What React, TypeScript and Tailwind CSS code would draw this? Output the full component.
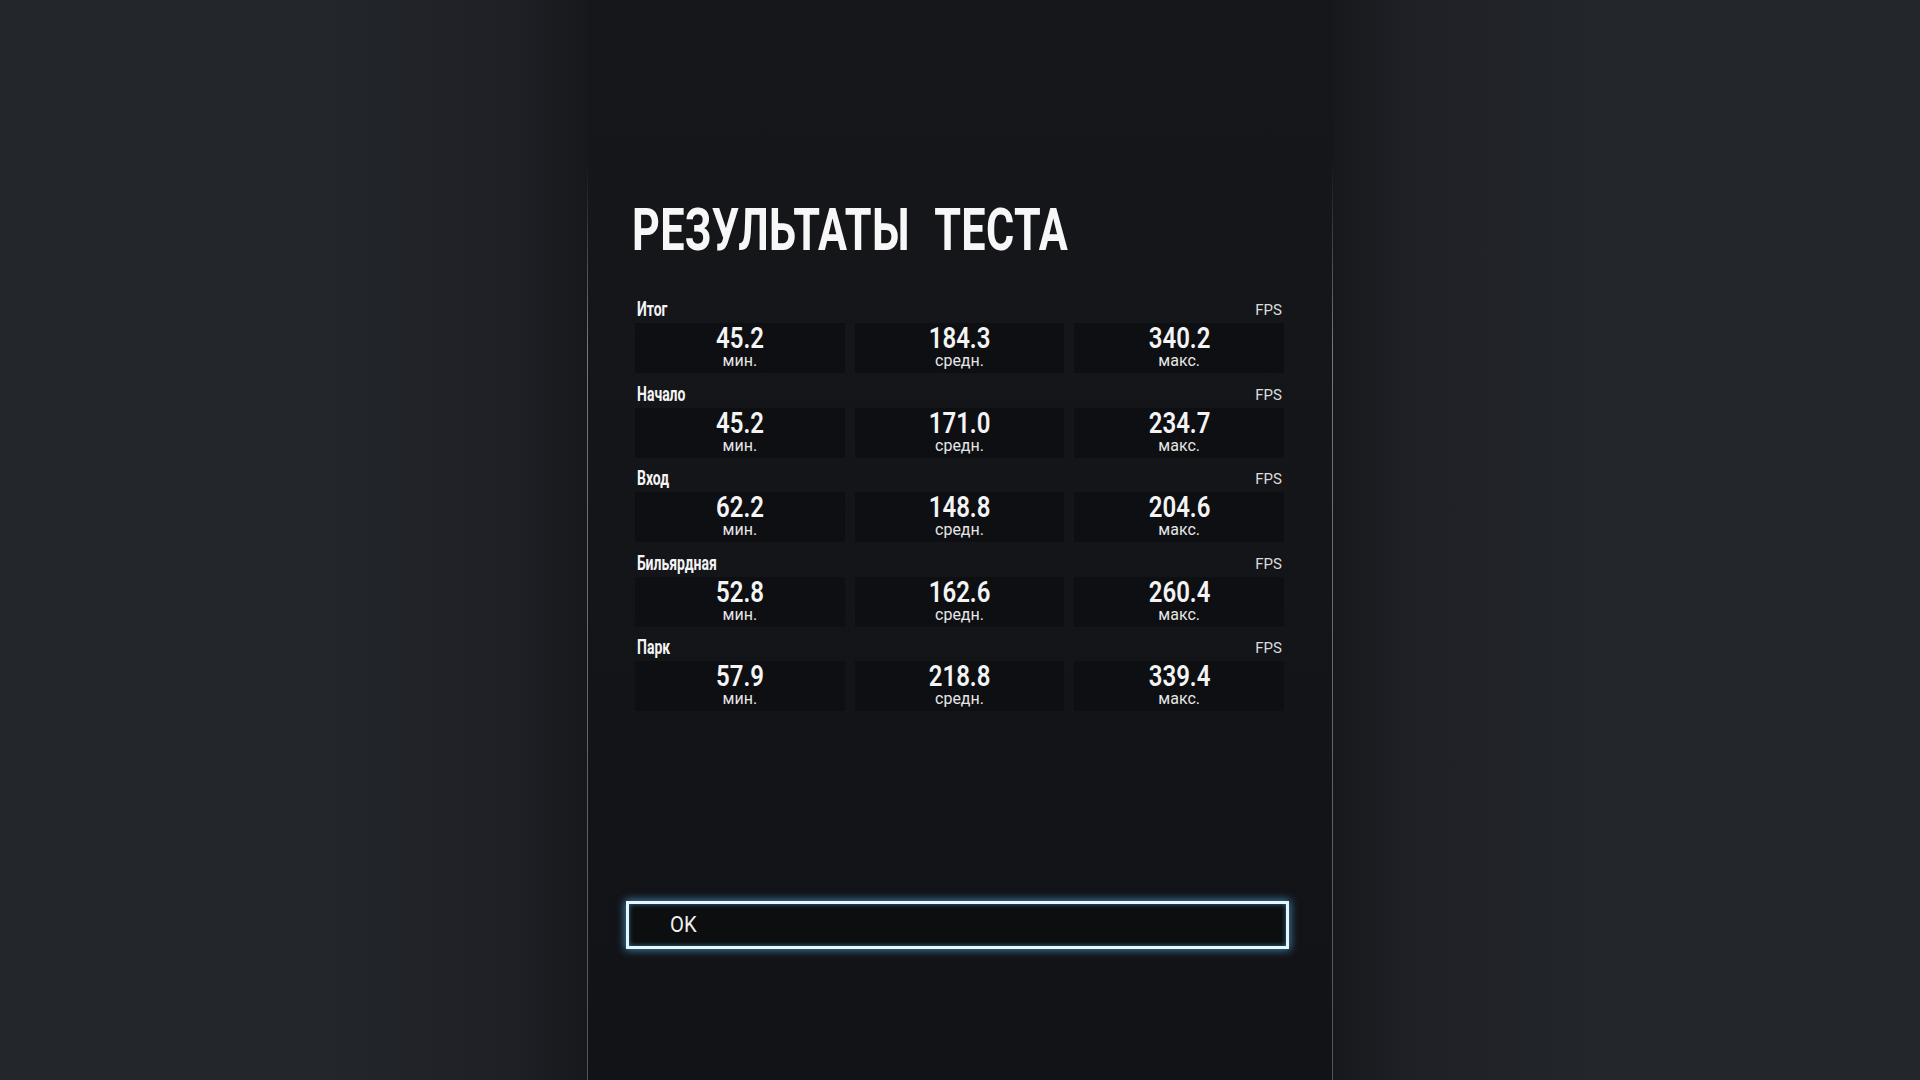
import React from "react";

type Row = { name: string; min: string; avg: string; max: string };

const rows: Row[] = [
  { name: "Итог", min: "45.2", avg: "184.3", max: "340.2" },
  { name: "Начало", min: "45.2", avg: "171.0", max: "234.7" },
  { name: "Вход", min: "62.2", avg: "148.8", max: "204.6" },
  { name: "Бильярдная", min: "52.8", avg: "162.6", max: "260.4" },
  { name: "Парк", min: "57.9", avg: "218.8", max: "339.4" },
];

function Cell({ value, label }: { value: string; label: string }) {
  return (
    <div className="flex h-[50px] flex-col items-center bg-[#0e0f12]">
      <span className="inline-block h-[29px] origin-center scale-x-[0.8] text-[30px] font-semibold leading-[29px] text-[#f4f4f4]">
        {value}
      </span>
      <span className="mt-[1px] text-[16px] leading-[16px] text-[#e6e6e6]">{label}</span>
    </div>
  );
}

export default function App() {
  return (
    <div
      className="flex h-[1080px] w-[1920px] overflow-hidden bg-[#23262b]"
      style={{ fontFamily: "Roboto, 'Noto Sans', 'DejaVu Sans', sans-serif" }}
    >
      <div className="h-full w-[587px] bg-linear-to-r from-[#23262b] from-55% via-[#1e2025] via-88% to-[#17181c]" />
      <div className="flex h-full w-[746px] bg-linear-to-b from-[#16171b] to-[#121317]">
        <div className="h-full w-px bg-linear-to-b from-transparent from-15% via-[#74777c] via-32% to-[#505358]" />
        <div className="flex flex-1 flex-col pl-[47px] pr-[48px] pt-[200px]">
          <div className="-ml-[3px] h-[60px]">
            <span className="inline-block origin-left scale-x-[0.72] whitespace-nowrap text-[60px] font-bold leading-[60px] tracking-[0.5px] text-[#f7f7f7] [word-spacing:20px]">
              РЕЗУЛЬТАТЫ ТЕСТА
            </span>
          </div>
          <div className="mt-[40px] flex flex-col gap-[11.5px]">
            {rows.map((r) => (
              <div key={r.name} className="flex flex-col">
                <div className="flex h-[23px] items-start justify-between px-[2px]">
                  <span className="inline-block origin-left scale-x-[0.7] whitespace-nowrap text-[20px] font-bold leading-[18px] text-[#f4f4f4]">
                    {r.name}
                  </span>
                  <span className="pt-[3px] text-[15px] leading-[15px] text-[#dcdcdc]">FPS</span>
                </div>
                <div className="grid grid-cols-3 gap-[10px]">
                  <Cell value={r.min} label="мин." />
                  <Cell value={r.avg} label="средн." />
                  <Cell value={r.max} label="макс." />
                </div>
              </div>
            ))}
          </div>
          <div className="-ml-[9px] -mr-[5px] mt-[190px] flex h-[48px] items-center border-[3px] border-[#e6f6ff] bg-[#0c0e0f] pl-[41px] shadow-[0_0_8px_1px_rgba(80,180,235,0.7),inset_0_0_5px_rgba(80,180,235,0.6)]">
            <span className="inline-block origin-left scale-x-[0.92] text-[22px] leading-none text-[#f0f0f0]">
              OK
            </span>
          </div>
        </div>
        <div className="h-full w-px bg-linear-to-b from-transparent from-15% via-[#74777c] via-32% to-[#505358]" />
      </div>
      <div className="h-full flex-1 bg-linear-to-l from-[#23262b] from-55% via-[#1e2025] via-88% to-[#17181c]" />
    </div>
  );
}
